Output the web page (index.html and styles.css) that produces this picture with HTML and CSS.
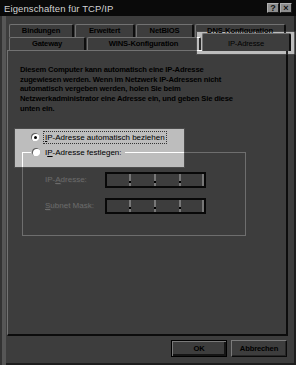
FILE: index.html
```html
<!DOCTYPE html>
<html>
  <head>
    <meta charset="utf-8">
    <meta name="viewport" content="width=device-width, initial-scale=1">
    <link rel="stylesheet" href="styles.css">
  </head>
  <body>
    <div class="window">
      <div class="titlebar">
        <span class="title">Eigenschaften für TCP/IP</span>
        <div class="controls">
          <span class="cbtn">?</span>
          <span class="cbtn">×</span>
        </div>
      </div>

      <div class="content">
        <div class="tabs">
          <div class="tabrow">
            <div class="tab w-bind">Bindungen</div>
            <div class="tab w-erw">Erweitert</div>
            <div class="tab w-net">NetBIOS</div>
            <div class="tab w-dns">DNS-Konfiguration</div>
          </div>
          <div class="tabrow">
            <div class="tab w-gate">Gateway</div>
            <div class="tab w-wins">WINS-Konfiguration</div>
            <div class="tab w-ip selected">IP-Adresse</div>
          </div>
        </div>

        <div class="panel">
          <p class="info">
            Diesem Computer kann automatisch eine IP-Adresse<br>
            zugewiesen werden. Wenn im Netzwerk IP-Adressen nicht<br>
            automatisch vergeben werden, holen Sie beim<br>
            Netzwerkadministrator eine Adresse ein, und geben Sie diese<br>
            unten ein.
          </p>

          <div class="option first">
            <span class="radio checked"></span>
            <span class="focus"><u>I</u>P-Adresse automatisch beziehen</span>
          </div>

          <div class="group">
            <div class="option group-title">
              <span class="radio"></span>
              <span>I<u>P</u>-Adresse festlegen:</span>
            </div>

            <div class="iprow top">
              <span class="dlabel">IP-<u>A</u>dresse:</span>
              <div class="field">
                <span class="oct"></span><span class="sep dot"></span>
                <span class="oct wide"></span><span class="sep dot"></span>
                <span class="oct wide"></span><span class="sep dot"></span>
                <span class="oct last"></span><span class="sep"></span>
              </div>
            </div>

            <div class="iprow">
              <span class="dlabel"><u>S</u>ubnet Mask:</span>
              <div class="field">
                <span class="oct"></span><span class="sep dot"></span>
                <span class="oct wide"></span><span class="sep dot"></span>
                <span class="oct wide"></span><span class="sep dot"></span>
                <span class="oct last"></span><span class="sep"></span>
              </div>
            </div>
          </div>
        </div>

        <div class="buttons">
          <button class="btn default">OK</button>
          <button class="btn">Abbrechen</button>
        </div>
      </div>

      <div class="spot spot-tab"></div>
      <div class="spot spot-radio"></div>
    </div>
  </body>
</html>
```

FILE: styles.css
```css
body { margin: 0; background: #3d3d3d; font-family: "Liberation Sans", Arial, sans-serif; font-size: 7.6px; color: #000 }
u { text-decoration: underline }

.window { position: relative; width: 296px; height: 365px; background: #3d3d3d; display: flex; flex-direction: column;
  box-shadow: inset 2px 0 #333, inset 6px 0 #565656, inset -2px 0 #1e1e1e, inset 0 -2px #1e1e1e }

.titlebar { height: 16px; flex-shrink: 0; background: #0a0a0a; display: flex; align-items: center; justify-content: space-between; padding: 0 4px 0 4px }
.title { color: #d2d2d2; font-size: 9.5px; letter-spacing: 0.1px }
.controls { display: flex; gap: 1px }
.cbtn { width: 12px; height: 10px; box-sizing: border-box; background: #8e8e8e; border: 1px solid; border-color: #b0b0b0 #1a1a1a #1a1a1a #b0b0b0;
  font-size: 9px; font-weight: bold; line-height: 8px; text-align: center; color: #111 }

.content { flex: 1; display: flex; flex-direction: column; padding: 8px 8px 8px 7px; font-weight: bold; letter-spacing: -0.15px }

.tabs { height: 26px; flex-shrink: 0 }
.tabrow { display: flex; gap: 1px; height: 13px; margin-left: 2px; align-items: flex-start }
.tab { flex-shrink: 0; box-sizing: border-box; height: 13px; border-top: 1px solid #727272; border-left: 1px solid #727272; border-right: 2px solid #0e0e0e;
  border-radius: 2px 2px 0 0; text-align: center; line-height: 11px; background: #3d3d3d }
.w-bind { width: 65px }
.w-erw { width: 60px }
.w-net { width: 58px }
.w-dns { width: 91px }
.w-gate { width: 77px }
.w-wins { width: 114px }
.w-ip { width: 89px }
.tab.selected { position: relative; z-index: 1; height: 18px; margin-top: -4px; line-height: 19px; font-weight: normal }

.panel { flex: 1; box-sizing: border-box; border-top: 1px solid #727272; border-left: 1px solid #727272; border-right: 2px solid #0c0c0c; border-bottom: 2px solid #0c0c0c;
  padding: 14px 10px 0 12px }

.info { margin: 0; line-height: 9.7px }

.option { display: flex; align-items: center; gap: 5px; height: 13px; font-weight: normal; font-size: 8px; letter-spacing: 0 }
.option.first { margin: 17px 0 0 11px }
.radio { width: 8px; height: 8px; border-radius: 50%; background: #565656; box-shadow: inset 1px 1px #1e1e1e; display: flex; align-items: center; justify-content: center }
.radio.checked::after { content: ""; width: 3px; height: 3px; border-radius: 50%; background: #000 }
.focus { outline: 1px dotted #111; outline-offset: 0; padding: 0 1px; line-height: 11px }

.group { margin: 8px 0 0 2px; width: 224px; box-sizing: border-box; padding: 0 0 21px 0; border: 1px solid #6e6e6e }
.group-title { margin: -7px 0 0 8px; width: fit-content; padding: 0 3px 0 1px; background: #3d3d3d }

.iprow { display: flex; align-items: center; height: 16px; margin-top: 10px }
.iprow.top { margin-top: 13px }
.dlabel { width: 60px; margin-left: 22px; color: #6c6c6c; font-weight: normal; font-size: 8px; letter-spacing: 0; text-shadow: 1px 1px #444 }

.field { width: 101px; height: 16px; box-sizing: border-box; border: 2px solid #080808; background: #3d3d3d; display: flex }
.oct { width: 22px }
.oct.wide { width: 23px }
.oct.last { width: 21px }
.sep { width: 2px; background: #777; position: relative }
.sep.dot::after { content: ""; position: absolute; left: 0; bottom: 3px; width: 2px; height: 2px; background: #000 }

.buttons { display: flex; justify-content: flex-end; gap: 4px; margin-top: 4px; padding-right: 1px }
.btn { width: 56px; height: 17px; box-sizing: border-box; background: #3d3d3d; border: 1px solid; border-color: #7a7a7a #0a0a0a #0a0a0a #7a7a7a;
  box-shadow: inset -1px -1px #262626; font-family: inherit; font-size: 7.6px; font-weight: bold; letter-spacing: -0.15px; color: #000; padding: 0 }
.btn.default { border: 1px solid #000; box-shadow: inset 1px 1px #7a7a7a, inset -2px -2px #151515 }

.spot { position: absolute; backdrop-filter: brightness(3.1); box-shadow: 0 0 0 1px rgba(255,255,255,0.08) }
.spot-tab { left: 197px; top: 32px; width: 98px; height: 22px }
.spot-radio { left: 15px; top: 129px; width: 169px; height: 38px }
```
